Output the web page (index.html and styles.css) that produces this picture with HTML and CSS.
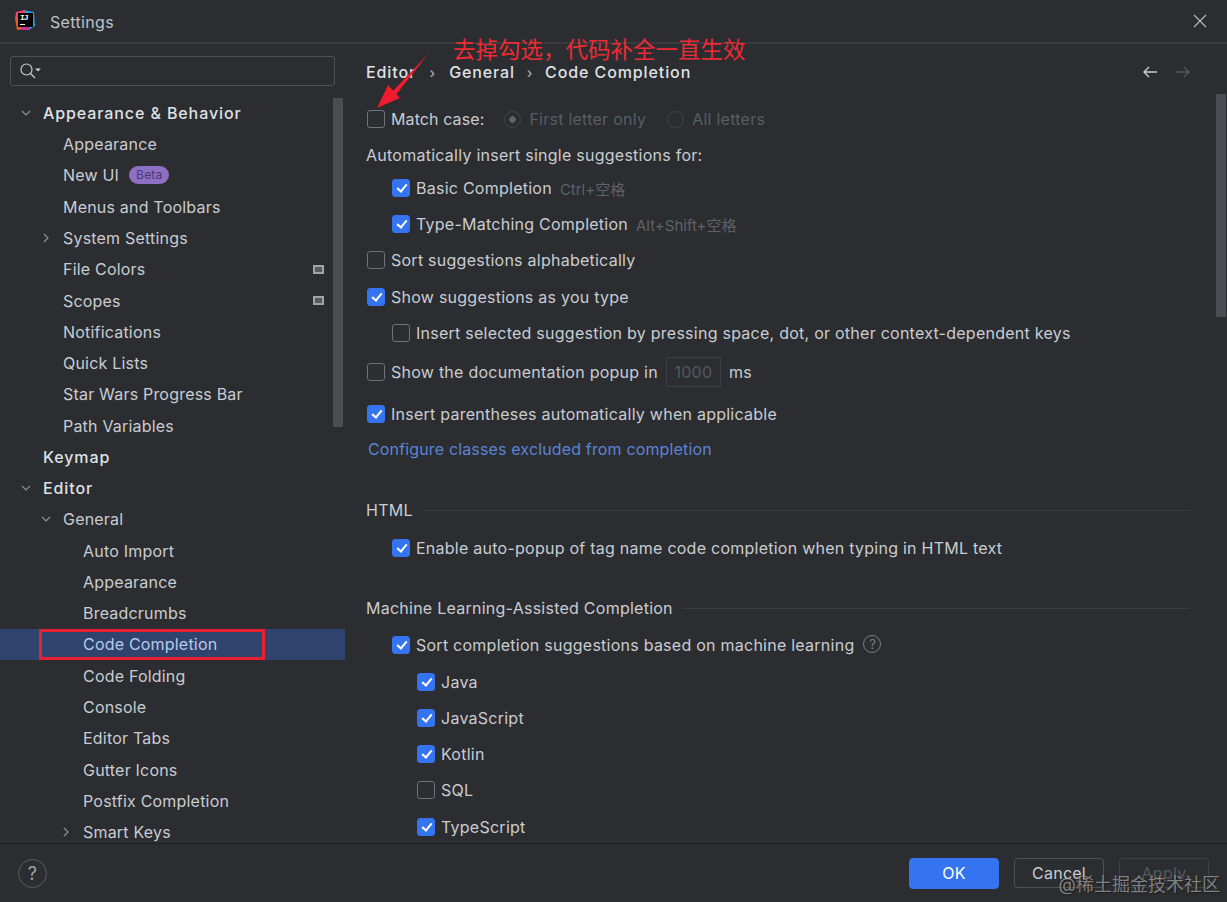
FILE: index.html
```html
<!DOCTYPE HTML>
<html>
    <head>
        <meta charset="UTF-8">
        <title>Settings</title>
        <link rel="stylesheet" href="styles.css">
    </head>
    <body>
        <div id="wrap">
            <div class="top">
                <svg class="logo" width="22" height="22" viewBox="0 0 22 22">
                    <polygon points="9,1 20,3 21,17 15,21 12,14" fill="#1f9fe0"/>
                    <polygon points="2,3 11,1 9,12 1,10" fill="#f0406a"/>
                    <polygon points="1,9 7,8 10,20 3,21" fill="#f05a28"/>
                    <polygon points="6,14 15,13 16,21 8,21" fill="#c82f9a"/>
                    <rect x="4" y="4" width="15" height="14" fill="#000"/>
                    <rect x="6" y="15" width="5" height="1" fill="#fff"/>
                    <text x="6" y="11" class="logo-text">IJ</text>
                </svg>
                <p>Settings</p>
                <svg class="close" width="14" height="14" viewBox="0 0 14 14"><path d="M1 1L13 13M13 1L1 13"/></svg>
            </div>
            <div class="main">
                <div class="side">
                    <div class="search">
                        <svg width="22" height="18" viewBox="0 0 22 18">
                            <circle cx="7.5" cy="7.5" r="5.5" class="line"/>
                            <path d="M11.5 11.5L16 16" class="line"/>
                            <path d="M16 6.5h6l-3 3z" fill="#c9ccd2"/>
                        </svg>
                    </div>
                    <ul class="tree">
                        <li class="head"><svg class="arrow" viewBox="0 0 10 10"><path d="M1 3l4 4 4-4"/></svg>Appearance &amp; Behavior</li>
                        <li class="lv1">Appearance</li>
                        <li class="lv1">New UI<span class="beta">Beta</span></li>
                        <li class="lv1">Menus and Toolbars</li>
                        <li class="lv1"><svg class="arrow" viewBox="0 0 10 10"><path d="M3 1l4 4-4 4"/></svg>System Settings</li>
                        <li class="lv1">File Colors<span class="mark"></span></li>
                        <li class="lv1">Scopes<span class="mark"></span></li>
                        <li class="lv1">Notifications</li>
                        <li class="lv1">Quick Lists</li>
                        <li class="lv1">Star Wars Progress Bar</li>
                        <li class="lv1">Path Variables</li>
                        <li class="head">Keymap</li>
                        <li class="head"><svg class="arrow" viewBox="0 0 10 10"><path d="M1 3l4 4 4-4"/></svg>Editor</li>
                        <li class="lv1"><svg class="arrow" viewBox="0 0 10 10"><path d="M1 3l4 4 4-4"/></svg>General</li>
                        <li class="lv2">Auto Import</li>
                        <li class="lv2">Appearance</li>
                        <li class="lv2">Breadcrumbs</li>
                        <li class="lv2 active">Code Completion<span class="red-box"></span></li>
                        <li class="lv2">Code Folding</li>
                        <li class="lv2">Console</li>
                        <li class="lv2">Editor Tabs</li>
                        <li class="lv2">Gutter Icons</li>
                        <li class="lv2">Postfix Completion</li>
                        <li class="lv2"><svg class="arrow" viewBox="0 0 10 10"><path d="M3 1l4 4-4 4"/></svg>Smart Keys</li>
                    </ul>
                    <div class="bar side-bar"></div>
                </div>
                <div class="content">
                    <div class="crumbs">
                        <span>Editor</span><i>›</i><span>General</span><i class="second">›</i><span>Code Completion</span>
                        <div class="nav">
                            <svg width="16" height="14" viewBox="0 0 16 14"><path d="M15 7H2M7 2L2 7l5 5" stroke="#c9ccd2"/></svg>
                            <svg width="16" height="14" viewBox="0 0 16 14"><path d="M1 7h13M9 2l5 5-5 5" stroke="#55585e"/></svg>
                        </div>
                    </div>
                    <div class="row m13"><b class="box"></b><span class="tight">Match case:</span><span class="radio on dim">First letter only</span><span class="radio dim">All letters</span></div>
                    <div class="row">Automatically insert single suggestions for:</div>
                    <div class="row in1 m-3"><b class="box ck"></b>Basic Completion<em>Ctrl+空格</em></div>
                    <div class="row in1"><b class="box ck"></b>Type-Matching Completion<em>Alt+Shift+空格</em></div>
                    <div class="row"><b class="box"></b>Sort suggestions alphabetically</div>
                    <div class="row m1"><b class="box ck"></b>Show suggestions as you type</div>
                    <div class="row in1"><b class="box"></b>Insert selected suggestion by pressing space, dot, or other context-dependent keys</div>
                    <div class="row m3"><b class="box"></b>Show the documentation popup in<span class="num">1000</span>ms</div>
                    <div class="row m6"><b class="box ck"></b>Insert parentheses automatically when applicable</div>
                    <div class="row link m-1">Configure classes excluded from completion</div>
                    <div class="row group m25">HTML</div>
                    <div class="row in1 m2"><b class="box ck"></b>Enable auto-popup of tag name code completion when typing in HTML text</div>
                    <div class="row group m24">Machine Learning-Assisted Completion</div>
                    <div class="row in1 m1"><b class="box ck"></b>Sort completion suggestions based on machine learning<span class="q">?</span></div>
                    <div class="row in2 m1"><b class="box ck"></b>Java</div>
                    <div class="row in2"><b class="box ck"></b>JavaScript</div>
                    <div class="row in2"><b class="box ck"></b>Kotlin</div>
                    <div class="row in2"><b class="box"></b>SQL</div>
                    <div class="row in2 m1"><b class="box ck"></b>TypeScript</div>
                    <div class="bar main-bar"></div>
                </div>
            </div>
            <div class="foot">
                <span class="help">?</span>
                <button class="ok">OK</button>
                <button>Cancel</button>
                <button class="off">Apply</button>
            </div>
            <!-- 标注 -->
            <div class="note">去掉勾选，代码补全一直生效</div>
            <svg class="note-arrow" width="60" height="60" viewBox="0 0 60 60">
                <path d="M54 2L17 41L20 45z" fill="#ee1c2e"/>
                <polygon points="2,57 13,34 25,47" fill="#ee1c2e"/>
            </svg>
            <div class="mark-text">@稀土掘金技术社区</div>
        </div>
    </body>
</html>
```

FILE: styles.css
```css
html,body{margin:0;padding:0;}
body{font-family: Inter,"Noto Sans CJK SC",sans-serif;font-size: 16px;color: #c9ccd2;background: #2b2d30;}
ul,li{margin:0;padding:0;list-style:none;}
p{margin:0;}

#wrap{
    position: relative;
    display: flex;
    flex-direction: column;
    width: 1227px;
    height: 902px;
    overflow: hidden;
    background: #2b2d30;
    letter-spacing: .25px;
}
.top{
    display: flex;
    align-items: center;
    flex: none;
    height: 42px;
    padding: 0 20px 0 14px;
    border-bottom: 2px solid #393b3f;
}
.top p{flex: 1;margin: 2px 0 0 14px;font-size: 16px;letter-spacing: .35px;color: #bfc2c8;}
.logo{margin-top: -3px;}
.logo-text{font-family: "Liberation Mono",monospace;font-size: 8px;font-weight: bold;fill: #fff;letter-spacing: -1px;}
.close path{stroke: #b4b7bd;stroke-width: 1.2;fill: none;}

.main{display: flex;flex: 1;min-height: 0;}
.side{position: relative;flex: none;width: 345px;overflow: hidden;letter-spacing: .2px;}
.search{
    display: flex;
    align-items: center;
    height: 28px;
    margin: 12px 10px 0;
    padding-left: 8px;
    border: 1px solid #4e5157;
    border-radius: 3px;
}
.search .line{fill: none;stroke: #c9ccd2;stroke-width: 1.2;}
.tree{margin-top: 11.3px;}
.tree li{
    position: relative;
    display: flex;
    align-items: center;
    height: 31.27px;
    white-space: nowrap;
}
.head{padding-left: 43px;font-weight: 500;color: #dfe1e5;letter-spacing: .9px;}
.lv1{padding-left: 63px;}
.lv2{padding-left: 83px;}
.tree li.active{background: #2e436e;color: #bcc9e6;}
.arrow{
    position: absolute;
    width: 10px;
    height: 10px;
    margin-left: -22px;
    fill: none;
    stroke: #8d9096;
    stroke-width: 1.2;
}
.beta{
    margin-left: 10px;
    padding: 0 7px;
    height: 18px;
    line-height: 18px;
    border-radius: 9px;
    background: #8d6fc4;
    color: #4c3a75;
    font-size: 12px;
}
.mark{
    position: absolute;
    right: 21px;
    width: 7px;
    height: 5px;
    background: #55585e;
    border: 2px solid #a0a3a8;
}
.red-box{
    position: absolute;
    left: 39px;
    top: 0;
    width: 220px;
    height: 25px;
    border: 3px solid #e8202f;
}
.bar{position: absolute;width: 10px;background: #4b4d52;}
.side-bar{right: 2px;top: 54px;height: 329px;}

.content{position: relative;flex: 1;padding-left: 21px;overflow: hidden;}
.crumbs{
    display: flex;
    align-items: center;
    height: 32px;
    margin-top: 12px;
    font-weight: 500;
    color: #dfe1e5;
    letter-spacing: .9px;
}
.crumbs i{width: 33px;text-align: center;font-style: normal;font-size: 14px;color: #a8abb1;}
.crumbs i.second{width: 30px;}
.nav{position: absolute;top: 21px;right: 36px;display: flex;gap: 17px;}
.nav path{fill: none;stroke-width: 1.4;}

.row{display: flex;align-items: center;height: 36px;white-space: nowrap;}
.m-3{margin-top: -3px;}
.m-1{margin-top: -1px;}
.m1{margin-top: 1px;}
.m2{margin-top: 2px;}
.m3{margin-top: 3px;}
.m6{margin-top: 6px;}
.m13{margin-top: 13px;}
.m24{margin-top: 24px;}
.m25{margin-top: 25px;}
.in1{padding-left: 25px;}
.in2{padding-left: 50px;}
.box{
    flex: none;
    box-sizing: border-box;
    width: 18px;
    height: 18px;
    margin-right: 6px;
    margin-left: 1px;
    border: 1px solid #6f7278;
    border-radius: 3px;
}
.box.ck{
    position: relative;
    background: #3574f0;
    border-color: #3574f0;
}
.box.ck::after{
    content: "";
    position: absolute;
    left: 5.5px;
    top: 1.5px;
    width: 4px;
    height: 8px;
    border: solid #fff;
    border-width: 0 2px 2px 0;
    transform: rotate(40deg);
}
.tight{letter-spacing: .1px;}
.radio{display: flex;align-items: center;}
.radio::before{
    content: "";
    box-sizing: border-box;
    width: 17px;
    height: 17px;
    margin-right: 8px;
    border: 1px solid #43454a;
    border-radius: 50%;
}
.radio.on::before{background: radial-gradient(circle,#5f6268 0 3px,transparent 3.5px);}
.dim{color: #5a5d63;}
.tight + .dim{margin-left: 20px;}
.dim + .dim{margin-left: 21px;}
.row em{margin-left: 8px;font-style: normal;font-size: 15px;color: #5f6268;letter-spacing: 0;}
.num{
    box-sizing: border-box;
    width: 55px;
    height: 30px;
    margin: 0 8px;
    line-height: 28px;
    text-align: center;
    border: 1px solid #3c3e43;
    color: #55585e;
}
.link{padding-left: 2px;color: #5a85d6;letter-spacing: .15px;}
.group::after{
    content: "";
    flex: 1;
    height: 1px;
    margin: 0 37px 0 9px;
    background: #393b40;
}
.q{
    box-sizing: border-box;
    width: 18px;
    height: 18px;
    margin: -2px 0 0 9px;
    line-height: 16px;
    text-align: center;
    font-size: 13px;
    letter-spacing: 0;
    color: #7a7d83;
    border: 1px solid #7a7d83;
    border-radius: 50%;
}
.main-bar{right: 1px;top: 50px;height: 223px;}

.foot{
    display: flex;
    align-items: center;
    flex: none;
    gap: 15px;
    height: 58px;
    padding: 0 18px;
    border-top: 1px solid #1e1f22;
}
.help{
    box-sizing: border-box;
    width: 29px;
    height: 29px;
    margin-right: auto;
    line-height: 27px;
    text-align: center;
    font-size: 18px;
    color: #a0a3a8;
    border: 1px solid #5a5d63;
    border-radius: 50%;
}
.foot button{
    box-sizing: border-box;
    width: 90px;
    height: 30px;
    padding: 0;
    font: inherit;
    letter-spacing: .25px;
    color: #c9ccd2;
    background: transparent;
    border: 1px solid #4e5157;
    border-radius: 4px;
}
.foot button.ok{height: 31px;background: #3574f0;border-color: #3574f0;color: #fff;}
.foot button.off{color: #55585e;border-color: #404247;}

.note{
    position: absolute;
    left: 453px;
    top: 32px;
    font-family: "Noto Sans CJK SC",sans-serif;
    font-size: 22.5px;
    line-height: 32px;
    letter-spacing: 0;
    color: #ee2a33;
}
.note-arrow{position: absolute;left: 375px;top: 51px;}
.mark-text{
    position: absolute;
    right: 7px;
    top: 870px;
    font-size: 18px;
    letter-spacing: 0;
    color: rgba(190,190,190,.6);
    text-shadow: 1px 1px 1px #1c1c1c;
}
```
